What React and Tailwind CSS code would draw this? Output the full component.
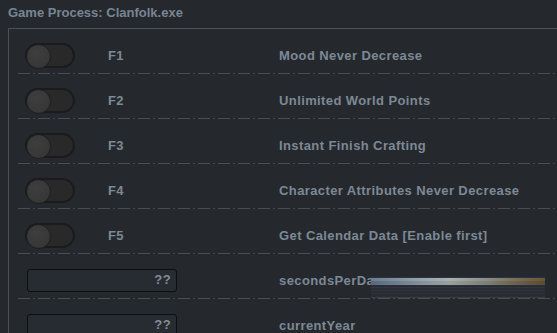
const toggles = [
  { key: 'F1', label: 'Mood Never Decrease' },
  { key: 'F2', label: 'Unlimited World Points' },
  { key: 'F3', label: 'Instant Finish Crafting' },
  { key: 'F4', label: 'Character Attributes Never Decrease' },
  { key: 'F5', label: 'Get Calendar Data [Enable first]' },
];

const inputs = ['secondsPerDay', 'currentYear'];

function Separator() {
  return (
    <div className="ml-[9px] h-px bg-[repeating-linear-gradient(90deg,#4a4e54_0px,#4a4e54_12px,transparent_12px,transparent_15px,#44484e_15px,#44484e_17px,transparent_17px,transparent_20px)]" />
  );
}

function Toggle() {
  return (
    <div className="relative w-[50px] h-[25px] rounded-full bg-[#29292a] border-2 border-[#1a1b1d]">
      <div className="absolute -left-[1px] -top-[1px] w-[25px] h-[25px] rounded-full bg-[radial-gradient(circle_at_40%_35%,#3e3e3f,#343435)] border border-[#1e1e20]" />
    </div>
  );
}

function Smear() {
  return (
    <div className="absolute left-[362px] top-[23px] w-[174px] flex flex-col">
      <div className="h-px bg-[#2b3447]" />
      <div className="h-[3px] bg-[linear-gradient(90deg,#6a7d8d,#98a5aa_30%,#aab1ab_45%,#8e9088_65%,#74674c_88%,#6a5533)]" />
      <div className="h-[4px] bg-[linear-gradient(90deg,#56687a,#8593a0_30%,#97a09e_45%,#7f8177_65%,#665a43_88%,#5c4a2e)]" />
      <div className="h-px bg-[#2a3040]" />
      <div className="h-px bg-[#26292e]" />
      <div className="h-px bg-[#33373d]" />
      <div className="h-[2px] bg-[#2a2d33]" />
      <div className="h-px bg-[#31353b]" />
      <div className="h-[2px] bg-[#282b30]" />
      <div className="h-px bg-[#2f3339]" />
      <div className="h-[3px] bg-[#292c31]" />
      <div className="h-px bg-[#3c4046]" />
    </div>
  );
}

export default function App() {
  return (
    <div className="w-[557px] h-[333px] overflow-hidden bg-[#25282c] font-['Liberation_Sans',Arial,sans-serif] font-bold text-[13px] text-[#7d8996]">
      <div className="h-[28px] pl-[8px] pt-[5px] leading-[16px] text-[#788594]">
        Game Process: Clanfolk.exe
      </div>
      <div className="ml-[8px] border-l border-t border-[#4d5055] tracking-[0.4px]">
        {toggles.map(t => (
          <div key={t.key}>
            <div className="h-[44px] pt-[9px] flex items-center">
              <div className="w-[99px] pl-[16px] -mt-[1px]">
                <Toggle />
              </div>
              <div className="w-[171px]">{t.key}</div>
              <div>{t.label}</div>
            </div>
            <Separator />
          </div>
        ))}
        {inputs.map((name, i) => (
          <div key={name}>
            <div className="relative h-[44px] pt-[9px] flex items-center">
              <div className="w-[270px] pl-[18px] -mt-[1px]">
                <div className="w-[150px] h-[23px] rounded-[3px] bg-[#272c33] border border-[#0d0e10] flex items-center justify-end pr-[5px] text-[#858b93]">
                  ??
                </div>
              </div>
              <div>{i === 0 ? 'secondsPerDa' : name}</div>
              {i === 0 && <Smear />}
            </div>
            <Separator />
          </div>
        ))}
      </div>
    </div>
  );
}
